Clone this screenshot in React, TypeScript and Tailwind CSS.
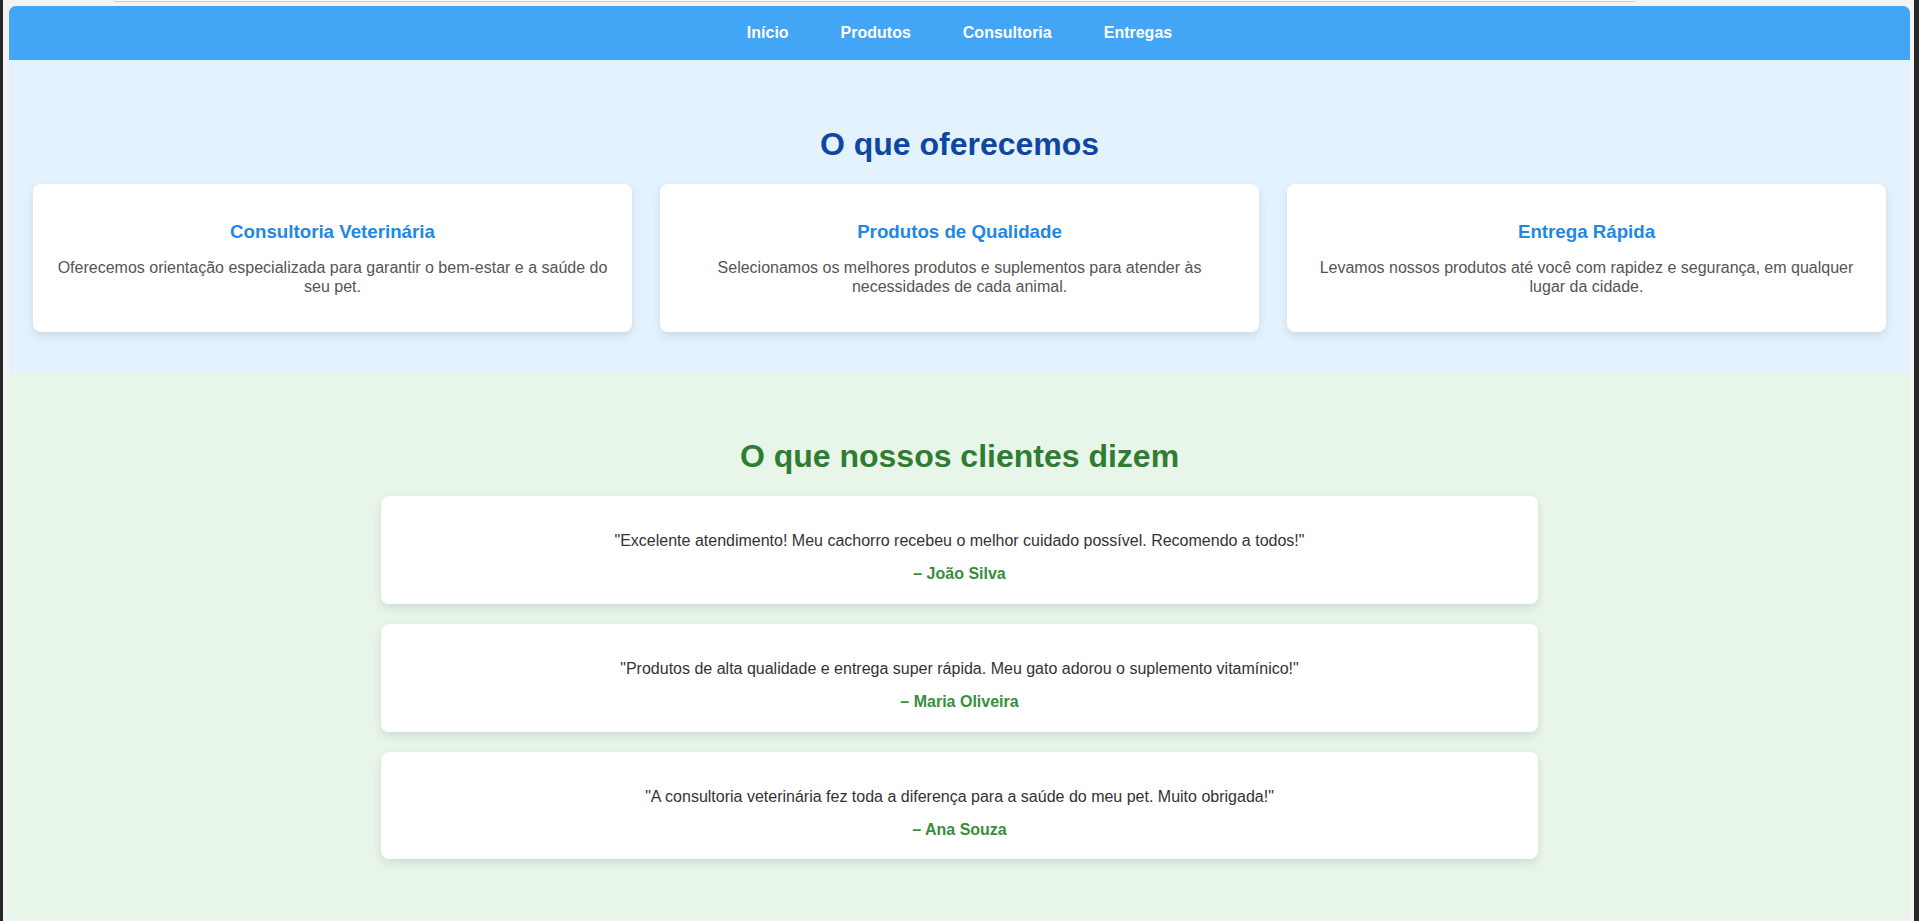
import React from "react";

const services = [
  {
    title: "Consultoria Veterinária",
    text: "Oferecemos orientação especializada para garantir o bem-estar e a saúde do seu pet.",
  },
  {
    title: "Produtos de Qualidade",
    text: "Selecionamos os melhores produtos e suplementos para atender às necessidades de cada animal.",
  },
  {
    title: "Entrega Rápida",
    text: "Levamos nossos produtos até você com rapidez e segurança, em qualquer lugar da cidade.",
  },
];

const testimonials = [
  {
    quote: "\"Excelente atendimento! Meu cachorro recebeu o melhor cuidado possível. Recomendo a todos!\"",
    author: "– João Silva",
  },
  {
    quote: "\"Produtos de alta qualidade e entrega super rápida. Meu gato adorou o suplemento vitamínico!\"",
    author: "– Maria Oliveira",
  },
  {
    quote: "\"A consultoria veterinária fez toda a diferença para a saúde do meu pet. Muito obrigada!\"",
    author: "– Ana Souza",
  },
];

export default function App() {
  return (
    <div
      className="flex h-[921px] w-[1919px] overflow-hidden bg-[#272727]"
      style={{ fontFamily: '"Liberation Sans", Arial, sans-serif' }}
    >
      <div className="w-[3px] shrink-0" />
      <div className="flex w-[1911px] shrink-0 flex-col bg-[#f3f3f3] pl-[6px] pr-[4px]">
        <div className="flex h-[6px] shrink-0 items-start">
          <div className="ml-[105px] h-[2px] w-[1521px] rounded-b-[8px] border-x border-b border-[#cdcdcd] bg-white" />
        </div>
        <div className="flex h-[914px] flex-col overflow-hidden rounded-t-[7px] bg-[#E8F5E9]">
          <header className="flex h-[54px] shrink-0 items-center justify-center gap-[52px] bg-[#42A5F5]">
            {["Início", "Produtos", "Consultoria", "Entregas"].map((n) => (
              <span key={n} className="text-[16px] font-bold leading-[18.4px] text-white">
                {n}
              </span>
            ))}
          </header>

          <section className="shrink-0 bg-[#E3F2FD] px-6 pb-10 pt-[66px]">
            <h2 className="mb-[21px] text-center text-[32px] font-bold leading-[36.8px] text-[#0D47A1]">
              O que oferecemos
            </h2>
            <div className="grid grid-cols-3 gap-7">
              {services.map((s) => (
                <div
                  key={s.title}
                  className="rounded-lg bg-white px-5 pb-5 pt-5 text-center shadow-[0_4px_10px_rgba(0,0,0,0.1)]"
                >
                  <h3 className="mt-[17px] text-[18.72px] font-bold leading-[21.5px] text-[#1E88E5]">
                    {s.title}
                  </h3>
                  <p className="mb-[16px] mt-[17px] text-[16px] leading-[18.4px] text-[#555555]">
                    {s.text}
                  </p>
                </div>
              ))}
            </div>
          </section>

          <section className="flex-1 bg-[#E8F5E9] px-6 pt-[66px]">
            <h2 className="mb-[21px] text-center text-[32px] font-bold leading-[36.8px] text-[#2E7D32]">
              O que nossos clientes dizem
            </h2>
            <div className="mx-auto flex w-[1157px] flex-col gap-5">
              {testimonials.map((t) => (
                <div
                  key={t.author}
                  className="rounded-lg bg-white px-5 pb-5 pt-5 text-center shadow-[0_4px_10px_rgba(0,0,0,0.1)]"
                >
                  <p className="mt-4 text-[16px] leading-[18.4px] text-[#333333]">{t.quote}</p>
                  <p className="mt-[15px] text-[16px] font-bold leading-[18.4px] text-[#388E3C]">
                    {t.author}
                  </p>
                </div>
              ))}
            </div>
          </section>
        </div>
        <div className="h-[1px] shrink-0" />
      </div>
      <div className="flex-1" />
    </div>
  );
}
